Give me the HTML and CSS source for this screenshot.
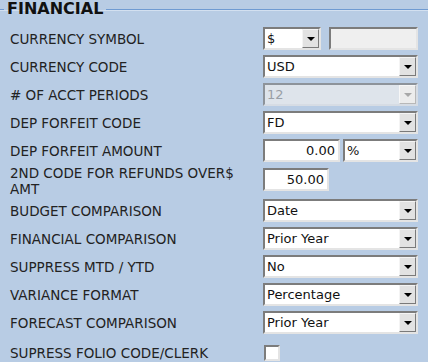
FILE: index.html
```
<!DOCTYPE html>
<html lang="en">
<head>
    <meta charset="UTF-8">
    <meta name="viewport" content="width=device-width, initial-scale=1.0">
    <title>Financial settings</title>
    <link rel="stylesheet" href="styles.css">
</head>
<body>
    <fieldset class="group">
        <legend>FINANCIAL</legend>
        <table class="settings">
            <tr>
                <td class="label">CURRENCY SYMBOL</td>
                <td class="field">
                    <div class="pair">
                        <div class="sel w-symbol">
                            <select><option>$</option></select>
                            <span class="arrow"></span>
                        </div>
                        <input type="text" class="text w-symtext" disabled>
                    </div>
                </td>
            </tr>
            <tr>
                <td class="label">CURRENCY CODE</td>
                <td class="field">
                    <div class="sel w-full">
                        <select><option>USD</option></select>
                        <span class="arrow"></span>
                    </div>
                </td>
            </tr>
            <tr>
                <td class="label"># OF ACCT PERIODS</td>
                <td class="field">
                    <div class="sel w-full disabled">
                        <select disabled><option>12</option></select>
                        <span class="arrow"></span>
                    </div>
                </td>
            </tr>
            <tr>
                <td class="label">DEP FORFEIT CODE</td>
                <td class="field">
                    <div class="sel w-full">
                        <select><option>FD</option></select>
                        <span class="arrow"></span>
                    </div>
                </td>
            </tr>
            <tr>
                <td class="label">DEP FORFEIT AMOUNT</td>
                <td class="field">
                    <div class="pair tight">
                        <input type="text" class="text num w-amount" value="0.00">
                        <div class="sel w-unit">
                            <select><option>%</option></select>
                            <span class="arrow"></span>
                        </div>
                    </div>
                </td>
            </tr>
            <tr class="tall">
                <td class="label">2ND CODE FOR REFUNDS OVER$ AMT</td>
                <td class="field">
                    <input type="text" class="text num w-refund" value="50.00">
                </td>
            </tr>
            <tr>
                <td class="label">BUDGET COMPARISON</td>
                <td class="field">
                    <div class="sel w-full">
                        <select><option>Date</option></select>
                        <span class="arrow"></span>
                    </div>
                </td>
            </tr>
            <tr>
                <td class="label">FINANCIAL COMPARISON</td>
                <td class="field">
                    <div class="sel w-full">
                        <select><option>Prior Year</option></select>
                        <span class="arrow"></span>
                    </div>
                </td>
            </tr>
            <tr>
                <td class="label">SUPPRESS MTD / YTD</td>
                <td class="field">
                    <div class="sel w-full">
                        <select><option>No</option></select>
                        <span class="arrow"></span>
                    </div>
                </td>
            </tr>
            <tr>
                <td class="label">VARIANCE FORMAT</td>
                <td class="field">
                    <div class="sel w-full">
                        <select><option>Percentage</option></select>
                        <span class="arrow"></span>
                    </div>
                </td>
            </tr>
            <tr>
                <td class="label">FORECAST COMPARISON</td>
                <td class="field">
                    <div class="sel w-full">
                        <select><option>Prior Year</option></select>
                        <span class="arrow"></span>
                    </div>
                </td>
            </tr>
            <tr class="last">
                <td class="label">SUPRESS FOLIO CODE/CLERK</td>
                <td class="field">
                    <span class="check"></span>
                </td>
            </tr>
        </table>
    </fieldset>
</body>
</html>
```

FILE: styles.css
```
body {
    margin: 0;
    background-color: #b8cce4;
    font-family: "DejaVu Sans", Verdana, sans-serif;
    font-size: 13.5px;
    color: #222;
}

.group {
    margin: 0;
    padding: 7px 0 0 4px;
    border: none;
    border-top: 1px solid #6f9bd2;
    box-shadow: inset 0 1px 0 #d3e0f0;
}

.group legend {
    padding: 0 3px;
    font-size: 16px;
    font-weight: bold;
    line-height: 18px;
    color: #111;
}

.settings {
    margin-left: 6px;
    border-collapse: collapse;
    table-layout: fixed;
}

.settings td {
    padding: 2px 0 3px;
    vertical-align: middle;
}

.settings .label {
    width: 240px;
    padding-right: 13px;
    line-height: 16px;
}

.settings .field {
    width: 155px;
    height: 23px;
}

.settings tr.tall td {
    padding-top: 0;
    padding-bottom: 0;
}

.settings tr.tall .field {
    vertical-align: top;
    padding-top: 3px;
}

.settings tr.last td {
    padding-top: 4px;
}

.pair {
    display: flex;
    gap: 8px;
}

.pair.tight {
    gap: 3px;
}

.sel {
    position: relative;
    height: 23px;
}

.sel select {
    -webkit-appearance: none;
    appearance: none;
    width: 100%;
    height: 23px;
    margin: 0;
    padding: 0 0 0 2px;
    border: 2px solid;
    border-color: #7c7c7c #e4e4e4 #e4e4e4 #7c7c7c;
    border-radius: 0;
    background-color: #fff;
    font-family: "DejaVu Sans", Verdana, sans-serif;
    font-size: 13px;
    color: #111;
    outline: none;
}

.sel .arrow {
    position: absolute;
    top: 2px;
    right: 2px;
    width: 17px;
    height: 19px;
    box-sizing: border-box;
    border: 1px solid;
    border-color: #f4f4f4 #7a7a7a #7a7a7a #f4f4f4;
    background-color: #e2e2e2;
}

.sel .arrow::after {
    content: "";
    position: absolute;
    left: 4px;
    top: 7px;
    border-left: 4px solid transparent;
    border-right: 4px solid transparent;
    border-top: 4px solid #000;
}

.sel.disabled select {
    background-color: #efefef;
    color: #8c8c8c;
}

.sel.disabled .arrow {
    background-color: #ececec;
    border-color: #f7f7f7 #b8b8b8 #b8b8b8 #f7f7f7;
}

.sel.disabled .arrow::after {
    border-top-color: #a8a8a8;
}

.text {
    box-sizing: border-box;
    height: 23px;
    margin: 0;
    padding: 0 3px;
    border: 2px solid;
    border-color: #7c7c7c #e4e4e4 #e4e4e4 #7c7c7c;
    background-color: #fff;
    font-family: "DejaVu Sans", Verdana, sans-serif;
    font-size: 13px;
    color: #111;
    outline: none;
}

.text:disabled {
    background-color: #efefef;
}

.num {
    text-align: right;
}

.w-full { width: 155px; }
.w-symbol { width: 58px; }
.w-symtext { width: 89px; }
.w-amount { width: 77px; }
.w-unit { width: 75px; }
.w-refund { width: 66px; }

.check {
    display: block;
    box-sizing: border-box;
    width: 16px;
    height: 16px;
    margin-left: 1px;
    border: 2px solid;
    border-color: #7c7c7c #e4e4e4 #e4e4e4 #7c7c7c;
    background-color: #fff;
}
```
